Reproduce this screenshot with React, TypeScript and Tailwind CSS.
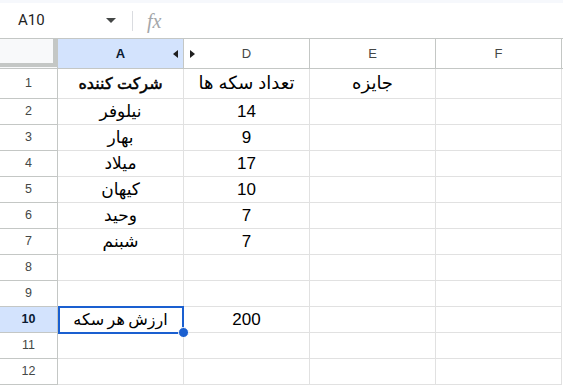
import React from "react";

const rows: { n: number; a: string; d: string; e?: string; h?: string; bold?: boolean }[] = [
  { n: 1, a: "شرکت کننده", d: "تعداد سکه ها", e: "جایزه", h: "h-[30px]", bold: true },
  { n: 2, a: "نیلوفر", d: "14" },
  { n: 3, a: "بهار", d: "9" },
  { n: 4, a: "میلاد", d: "17" },
  { n: 5, a: "کیهان", d: "10" },
  { n: 6, a: "وحید", d: "7" },
  { n: 7, a: "شبنم", d: "7" },
  { n: 8, a: "", d: "" },
  { n: 9, a: "", d: "" },
  { n: 10, a: "ارزش هر سکه", d: "200" },
  { n: 11, a: "", d: "" },
  { n: 12, a: "", d: "" },
];

const font = { fontFamily: '"Liberation Sans", "DejaVu Sans", Arial, sans-serif' };

export default function App() {
  return (
    <div className="w-[563px] h-[387px] overflow-hidden bg-white relative" style={font}>
      <div className="h-[3px] bg-[#f6f8fc]" />
      <div className="h-[35px] flex items-center text-[15px] text-[#1f1f1f]">
        <div className="w-[133px] flex items-center pl-[18px] pr-[14px] border-r border-[#dadce0] h-[20px]">
          <span className="flex-1" style={{ fontFamily: 'Roboto, "Liberation Sans", sans-serif' }}>A10</span>
          <svg width="10" height="6" viewBox="0 0 10 6" className="mr-[2px]">
            <path d="M0 0 L10 0 L5 5 Z" fill="#444746" />
          </svg>
        </div>
        <span
          className="ml-[14px] text-[20px] italic text-[#a4a7aa]"
          style={{ fontFamily: '"Liberation Serif", serif' }}
        >
          fx
        </span>
      </div>
      {/* header row */}
      <div className="flex h-[31px] border-t border-b border-[#c4c7c5] text-[13px] text-[#444746]">
        <div className="w-[58px] h-full relative bg-[#f8f9fa] border-r border-[#c4c7c5]">
          <div className="absolute right-0 top-0 w-[4px] h-[28px] bg-[#c4c7c5]" />
          <div className="absolute left-0 top-[24px] w-[57px] h-[4px] bg-[#c4c7c5]" />
        </div>
        <div className="w-[126px] h-full relative bg-[#d3e3fd] border-r border-[#c4c7c5] flex items-center justify-center font-bold text-[#0b1a33]">
          A
          <svg width="5" height="8" viewBox="0 0 5 8" className="absolute right-[5px] top-[11px]">
            <path d="M5 0 L5 8 L0 4 Z" fill="#1f1f1f" />
          </svg>
        </div>
        <div className="w-[126px] h-full relative border-r border-[#c4c7c5] flex items-center justify-center">
          D
          <svg width="5" height="8" viewBox="0 0 5 8" className="absolute left-[6px] top-[11px]">
            <path d="M0 0 L0 8 L5 4 Z" fill="#1f1f1f" />
          </svg>
        </div>
        <div className="w-[126px] h-full border-r border-[#c4c7c5] flex items-center justify-center">E</div>
        <div className="w-[126px] h-full border-r border-[#c4c7c5] flex items-center justify-center">F</div>
      </div>
      {rows.map((r) => {
        const sel = r.n === 10;
        return (
          <div key={r.n} className={`flex ${r.h ?? "h-[26px]"}`}>
            <div
              className={`w-[58px] h-full border-r border-b border-[#c4c7c5] flex items-center justify-center text-[12.5px] ${
                sel ? "bg-[#d3e3fd] font-bold text-[#0b1a33]" : "text-[#444746]"
              }`}
            >
              {r.n}
            </div>
            <div
              dir="rtl"
              className={`w-[126px] h-full border-r border-b border-[#e1e1e1] flex items-center justify-center text-black relative ${
                r.bold ? "text-[16px] [-webkit-text-stroke:0.5px_black]" : sel ? "text-[16px] [word-spacing:-1px]" : "text-[17px]"
              }`}
            >
              {r.a}
              {sel && (
                <>
                  <div className="absolute left-0 top-[-1px] w-[126px] h-[28px] border-2 border-[#1a5fd0]" />
                  <div className="absolute right-[-6px] bottom-[-6px] w-[11px] h-[11px] rounded-full bg-[#1a5fd0] border border-white z-10" />
                </>
              )}
            </div>
            <div dir="rtl" className="w-[126px] h-full border-r border-b border-[#e1e1e1] flex items-center justify-center text-[17px] text-black">
              {r.n === 1 ? <span className="text-[18px]">{r.d}</span> : r.d}
            </div>
            <div dir="rtl" className="w-[126px] h-full border-r border-b border-[#e1e1e1] flex items-center justify-center text-[18px] text-black">
              {r.e ?? ""}
            </div>
            <div className="w-[126px] h-full border-r border-b border-[#e1e1e1]" />
          </div>
        );
      })}
    </div>
  );
}
